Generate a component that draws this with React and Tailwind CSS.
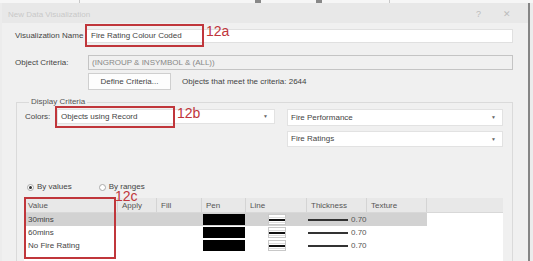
import React from 'react';

const columns = [
  { name: 'Value', w: 'w-[94px]' },
  { name: 'Apply', w: 'w-[39px]' },
  { name: 'Fill', w: 'w-[45px]' },
  { name: 'Pen', w: 'w-[44px]' },
  { name: 'Line', w: 'w-[61px]' },
  { name: 'Thickness', w: 'w-[60px]' },
  { name: 'Texture', w: 'w-[60px]' },
];

const rows = ['30mins', '60mins', 'No Fire Rating'];

const Combo = ({ text, className }) => (
  <div className={`flex items-center justify-between bg-white border border-[#e2e2e2] pl-[3px] pr-[6px] text-[#444] ${className}`}>
    <span>{text}</span>
    <span className="text-[5px] text-[#666]">▼</span>
  </div>
);

const Row = ({ label, selected }) => (
  <div className="flex h-[13px] items-center">
    <div className={`flex h-full items-center ${selected ? 'bg-[#d2d2d2]' : ''}`}>
      <div className="w-[94px] pl-[4px] text-[#444]">{label}</div>
      <div className="w-[39px]" />
      <div className="w-[45px]" />
      <div className="w-[44px] h-full py-[1px] pl-[1px] pr-[1px]">
        <div className="h-full bg-black" />
      </div>
      <div className="w-[61px] flex justify-center">
        <div className="w-[18px] h-[11px] bg-white border border-[#c8c8c8] flex flex-col justify-center gap-[1px]">
          <div className="w-full h-px bg-[#ddd]" />
          <div className="w-full h-[2px] bg-[#111]" />
          <div className="w-full h-px bg-[#ddd]" />
        </div>
      </div>
      <div className="w-[60px] flex items-center pl-[1px]">
        <div className="w-[40px] h-[2px] bg-[#333]" />
        <span className="ml-[3px] text-[#555]">0.70</span>
      </div>
      <div className="w-[60px]" />
    </div>
  </div>
);

export default function App() {
  return (
    <div className="relative w-[533px] h-[261px] overflow-hidden bg-[#ececec] font-['Liberation_Sans',Arial,sans-serif] text-[8px] leading-none text-[#333]">
      {/* window behind */}
      <div className="h-[3px] bg-[#f6f6f6] flex">
        <div className="w-[80px] border-r border-[#c8c8c8]" />
        <div className="w-[175px]" />
        <div className="w-[6px] bg-[#888]" />
        <div className="w-[55px]" />
        <div className="w-[6px] bg-[#888]" />
        <div className="w-[68px] border-r border-[#c8c8c8]" />
      </div>

      <div className="ml-[2px] w-[528px] h-[258px] overflow-hidden bg-[#f0f0f0] border-r-2 border-[#858585]">
        <div className="h-[20px] bg-[#e8e8e8] flex items-center justify-between pt-[3px] pl-[6px] pr-[17px] text-[#c9c9c9]">
          <span>New Data Visualization</span>
          <div className="flex gap-[22px] text-[9px] text-[#bcbcbc]">
            <span>?</span>
            <span>✕</span>
          </div>
        </div>

        <div className="flex flex-col pl-[13px] pr-[15px]">
          <div className="mt-[6px] flex items-center h-[14px] shrink-0">
            <div className="w-[71px] text-[#444]">Visualization Name</div>
            <div className="flex-1 h-full bg-white border border-[#e0e0e0] flex items-center pl-[4px] text-[#444]">
              Fire Rating Colour Coded
            </div>
          </div>

          <div className="mt-[12px] flex items-center h-[15px] shrink-0">
            <div className="w-[73px] text-[#444]">Object Criteria:</div>
            <div className="flex-1 h-full bg-[#f0f0f0] border border-[#c4c4c4] flex items-center pl-[3px] text-[#888]">
              (INGROUP &amp; INSYMBOL &amp; (ALL))
            </div>
          </div>

          <div className="mt-[3px] flex items-center h-[17px] shrink-0">
            <div className="w-[73px]" />
            <div className="w-[83px] h-full bg-[#fdfdfd] border border-[#cfcfcf] flex items-center justify-center text-[#444]">
              Define Criteria...
            </div>
            <span className="ml-[11px] text-[#444]">Objects that meet the criteria: 2644</span>
          </div>

          <fieldset className="mt-[7px] ml-[1px] h-[200px] shrink-0 border border-[#dadada] pl-[8px] pr-[9px]">
            <legend className="ml-[4px] px-[2px] leading-[10px] text-[#555]">Display Criteria</legend>
            <div className="mt-[2px] flex justify-between">
              <div className="flex items-center h-[15px]">
                <span className="w-[32px] text-[#444]">Colors:</span>
                <Combo text="Objects using Record" className="w-[218px] h-[15px]" />
              </div>
              <div className="flex flex-col gap-[5px]">
                <Combo text="Fire Performance" className="w-[216px] h-[17px]" />
                <Combo text="Fire Ratings" className="w-[216px] h-[16px]" />
              </div>
            </div>

            <div className="mt-[36px] flex items-center h-[8px] text-[#444]">
              <div className="ml-[2px] w-[7px] h-[7px] rounded-full border border-[#aaa] bg-white flex items-center justify-center">
                <div className="w-[3px] h-[3px] rounded-full bg-[#333]" />
              </div>
              <span className="ml-[3px]">By values</span>
              <div className="ml-[27px] w-[7px] h-[7px] rounded-full border border-[#aaa] bg-white" />
              <span className="ml-[3px]">By ranges</span>
            </div>

            <div className="mt-[7px] ml-[-1px] w-[479px] bg-white">
              <div className="flex h-[15px] bg-[#e8e8e8] border-b border-[#d8d8d8] text-[#555]">
                {columns.map((c) => (
                  <div key={c.name} className={`${c.w} h-full flex items-center pl-[4px] pt-[2px] border-r border-[#d4d4d4]`}>
                    {c.name}
                  </div>
                ))}
              </div>
              {rows.map((r, i) => (
                <Row key={r} label={r} selected={i === 0} />
              ))}
              <div className="h-[20px]" />
            </div>
          </fieldset>
        </div>
      </div>

      {/* annotations */}
      <div className="absolute left-[85px] top-[24px] w-[119px] h-[23px] border-2 border-[#c0363b]" />
      <span className="absolute left-[206px] top-[24px] text-[14px] leading-[14px] text-[#c0363b]">12a</span>
      <div className="absolute left-[55px] top-[106px] w-[120px] h-[22px] border-2 border-[#c0363b]" />
      <span className="absolute left-[177px] top-[106px] text-[14px] leading-[14px] text-[#c0363b]">12b</span>
      <div className="absolute left-[24px] top-[197px] w-[92px] h-[62px] border-2 border-[#c0363b]" />
      <span className="absolute left-[115px] top-[190px] text-[14px] leading-[12px] text-[#c0363b]">12c</span>
    </div>
  );
}
